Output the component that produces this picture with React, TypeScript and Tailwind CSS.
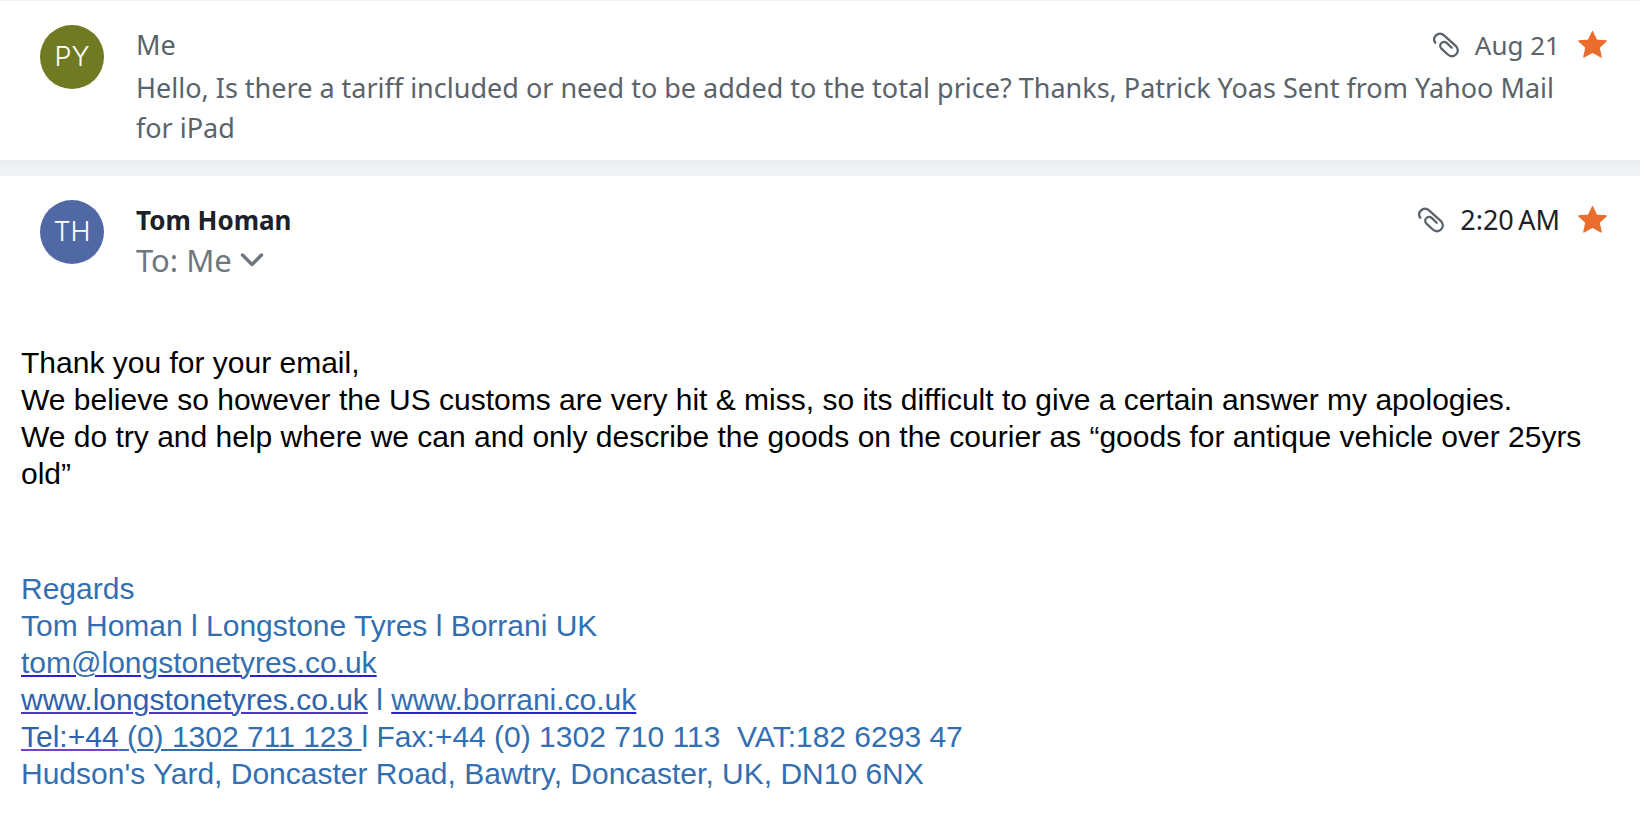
import type { ReactNode } from "react";

function Avatar({ initials, tone }: { initials: string; tone: string }) {
  return (
    <div className={`flex size-16 shrink-0 items-center justify-center rounded-full font-['Inter',sans-serif] text-[27px] font-light text-white ${tone}`}>
      {initials}
    </div>
  );
}

function Clip() {
  return (
    <svg viewBox="0 0 26 26" className="size-[26px]" fill="none" stroke="#5b636a" strokeWidth="2.3" strokeLinecap="round" role="img" aria-label="Has attachment">
      <path d="M2.200 10.700C.6 8.200 1 5.200 3 3.300C5.300 1.100 8.600 1.100 11 3.300L22.700 13.900C25.300 16.300 25.500 19.900 23.200 22.300C20.900 24.800 17.400 24.900 14.800 22.500L8.700 16.900C6.900 15.200 6.700 12.800 8.200 11.200C9.700 9.600 12.200 9.600 14 11.200L18.700 15.800" />
    </svg>
  );
}

function Star() {
  return (
    <button type="button" aria-label="Starred" className="shrink-0">
      <svg viewBox="0 1 30 28" className="h-7 w-[30px]" fill="#eb6c2c" stroke="#eb6c2c" strokeWidth="1.4" strokeLinejoin="round">
        <path d="M14.500 1.700L18.400 10.100L28.100 11L21 17.500L23.100 26.900L14.500 22.200L5.900 26.900L8 17.500L.9 11L10.600 10.100Z" />
      </svg>
    </button>
  );
}

function Meta({ children, tone }: { children: ReactNode; tone: string }) {
  return (
    <div className="flex items-center gap-4">
      <Clip />
      <time className={tone}>{children}</time>
    </div>
  );
}

const link = "underline decoration-2 underline-offset-2";

export default function App() {
  return (
    <main className="min-h-screen bg-white font-['Noto_Sans',sans-serif] text-[27px] leading-10">
      <article className="flex border-t border-[#eff1f4] pt-6 pr-8 pb-3 pl-10 text-[#5b636a]">
        <Avatar initials="PY" tone="bg-[#6f7a22]" />
        <div className="ml-8 min-w-0 flex-1">
          <header className="flex justify-between">
            <h2>Me</h2>
            <Meta tone="text-[26px] text-[#5b636a]">Aug 21</Meta>
          </header>
          <p className="pt-[3px]">
            Hello, Is there a tariff included or need to be added to the total price? Thanks, Patrick Yoas Sent from Yahoo Mail for iPad
          </p>
        </div>
        <div className="ml-[18px] flex h-10 items-center">
          <Star />
        </div>
      </article>
      <div className="h-4 bg-linear-to-b from-[#ebecf1] to-[#f0f2f5] to-50%" />
      <article>
        <div className="flex pt-6 pr-8 pl-10">
          <Avatar initials="TH" tone="bg-[#5069a4]" />
          <div className="ml-8 min-w-0 flex-1">
            <header className="flex justify-between">
              <h2 className="text-[26px] font-bold text-[#1d2228]">Tom Homan</h2>
              <Meta tone="text-[#1d2228]">{"2:20\u202fAM"}</Meta>
            </header>
            <button type="button" className="flex items-center gap-2 text-[31px] text-[#6e7780]">
              To: Me
              <svg viewBox="0 0 24 14" className="h-[14px] w-6" fill="none" stroke="currentColor" strokeWidth="3.4" strokeLinecap="round" strokeLinejoin="round" aria-hidden="true">
                <path d="M2.500 2L12 11.500L21.500 2" />
              </svg>
            </button>
          </div>
          <div className="ml-[18px] flex h-10 items-center">
            <Star />
          </div>
        </div>
        <div className="px-[21px] pt-16 font-['Liberation_Sans',sans-serif] text-[30px] leading-[37px] text-black">
          <p>Thank you for your email,</p>
          <p>We believe so however the US customs are very hit &amp; miss, so its difficult to give a certain answer my apologies.</p>
          <p>We do try and help where we can and only describe the goods on the courier as “goods for antique vehicle over 25yrs old”</p>
          <address className="pt-[78px] text-[#336fb0] not-italic">
            <p>Regards</p>
            <p>Tom Homan l Longstone Tyres l Borrani UK</p>
            <p>
              <a href="mailto:tom@longstonetyres.co.uk" className={`${link} decoration-[#2a22d0]`}>tom@longstonetyres.co.uk</a>
            </p>
            <p>
              <a href="#longstone" className={`${link} text-[#2f62ad] decoration-[#4a35c4]`}>www.longstonetyres.co.uk</a>
              {" l "}
              <a href="#borrani" className={`${link} decoration-[#2a22d0]`}>www.borrani.co.uk</a>
            </p>
            <p className="whitespace-pre-wrap">
              <a href="tel:+441302711123">
                <span className={`${link} text-[#2f62ad] decoration-[#7a3fc8]`}>Tel:+44</span>
                <span className={`${link} decoration-[#336fb0]`}>{" (0) 1302 711 123 "}</span>
              </a>
              {"l Fax:+44 (0) 1302 710 113  VAT:182 6293 47"}
            </p>
            <p>Hudson's Yard, Doncaster Road, Bawtry, Doncaster, UK, DN10 6NX</p>
          </address>
        </div>
      </article>
    </main>
  );
}
